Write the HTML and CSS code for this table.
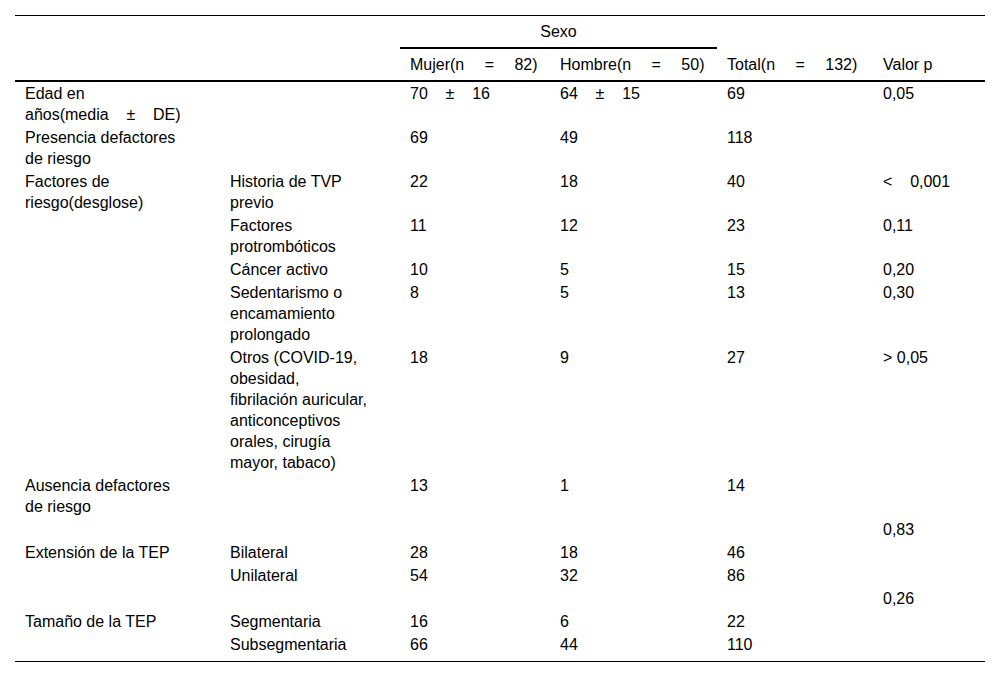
FILE: index.html
```html
<!DOCTYPE html>
<html lang="es">
<head>
<meta charset="utf-8">
<title>Tabla</title>
<link rel="stylesheet" href="styles.css">
</head>
<body>
<table class="tbl">
  <colgroup>
    <col class="w1"><col class="w2"><col class="w3"><col class="w4"><col class="w5"><col class="w6">
  </colgroup>
  <thead>
    <tr class="h1">
      <td colspan="2"></td>
      <th colspan="2" class="sexo">Sexo</th>
      <td colspan="2"></td>
    </tr>
    <tr class="h2">
      <th class="c1"></th>
      <th class="c2"></th>
      <th>Mujer(n&nbsp;&emsp;=&nbsp;&emsp;82)</th>
      <th>Hombre(n&nbsp;&emsp;=&nbsp;&emsp;50)</th>
      <th>Total(n&nbsp;&emsp;=&nbsp;&emsp;132)</th>
      <th>Valor p</th>
    </tr>
  </thead>
  <tbody>
    <tr>
      <td class="c1">Edad en años(media&nbsp;&nbsp;&nbsp;&nbsp;±&nbsp;&nbsp;&nbsp;&nbsp;DE)</td>
      <td class="c2"></td>
      <td>70&nbsp;&nbsp;&nbsp;&nbsp;±&nbsp;&nbsp;&nbsp;&nbsp;16</td>
      <td>64&nbsp;&nbsp;&nbsp;&nbsp;±&nbsp;&nbsp;&nbsp;&nbsp;15</td>
      <td>69</td>
      <td>0,05</td>
    </tr>
    <tr>
      <td class="c1">Presencia defactores de riesgo</td>
      <td class="c2"></td>
      <td>69</td>
      <td>49</td>
      <td>118</td>
      <td></td>
    </tr>
    <tr>
      <td class="c1">Factores de riesgo(desglose)</td>
      <td class="c2">Historia de TVP previo</td>
      <td>22</td>
      <td>18</td>
      <td>40</td>
      <td>&lt;&nbsp;&nbsp;&nbsp;&nbsp;0,001</td>
    </tr>
    <tr>
      <td class="c1"></td>
      <td class="c2">Factores protrombóticos</td>
      <td>11</td>
      <td>12</td>
      <td>23</td>
      <td>0,11</td>
    </tr>
    <tr>
      <td class="c1"></td>
      <td class="c2">Cáncer activo</td>
      <td>10</td>
      <td>5</td>
      <td>15</td>
      <td>0,20</td>
    </tr>
    <tr>
      <td class="c1"></td>
      <td class="c2">Sedentarismo o encamamiento prolongado</td>
      <td>8</td>
      <td>5</td>
      <td>13</td>
      <td>0,30</td>
    </tr>
    <tr>
      <td class="c1"></td>
      <td class="c2">Otros (COVID-19, obesidad, fibrilación auricular, anticonceptivos orales, cirugía mayor, tabaco)</td>
      <td>18</td>
      <td>9</td>
      <td>27</td>
      <td>&gt; 0,05</td>
    </tr>
    <tr>
      <td class="c1">Ausencia defactores de riesgo</td>
      <td class="c2"></td>
      <td>13</td>
      <td>1</td>
      <td>14</td>
      <td></td>
    </tr>
    <tr>
      <td class="c1"></td>
      <td class="c2"></td>
      <td></td>
      <td></td>
      <td></td>
      <td>0,83</td>
    </tr>
    <tr>
      <td class="c1">Extensión de la TEP</td>
      <td class="c2">Bilateral</td>
      <td>28</td>
      <td>18</td>
      <td>46</td>
      <td></td>
    </tr>
    <tr>
      <td class="c1"></td>
      <td class="c2">Unilateral</td>
      <td>54</td>
      <td>32</td>
      <td>86</td>
      <td></td>
    </tr>
    <tr>
      <td class="c1"></td>
      <td class="c2"></td>
      <td></td>
      <td></td>
      <td></td>
      <td>0,26</td>
    </tr>
    <tr>
      <td class="c1">Tamaño de la TEP</td>
      <td class="c2">Segmentaria</td>
      <td>16</td>
      <td>6</td>
      <td>22</td>
      <td></td>
    </tr>
    <tr class="last">
      <td class="c1"></td>
      <td class="c2">Subsegmentaria</td>
      <td>66</td>
      <td>44</td>
      <td>110</td>
      <td></td>
    </tr>
  </tbody>
</table>
</body>
</html>
```
FILE: styles.css
```css
html, body {
  background: #ffffff;
}
body {
  margin: 15px;
  font-family: "Liberation Sans", Arial, sans-serif;
  font-size: 16px;
  line-height: 21px;
  color: #000000;
}
.tbl {
  width: 970px;
  table-layout: fixed;
  border-collapse: collapse;
  border-top: 1px solid #000;
  border-bottom: 1px solid #000;
}
.w1 { width: 205px; }
.w2 { width: 180px; }
.w3 { width: 150px; }
.w4 { width: 167px; }
.w5 { width: 156px; }
.w6 { width: 112px; }

.tbl th,
.tbl td {
  padding: 1px 10px;
  text-align: left;
  vertical-align: top;
  font-weight: normal;
}
.tbl thead th,
.tbl thead td {
  padding-top: 5px;
  padding-bottom: 5px;
  vertical-align: middle;
}
.tbl .sexo {
  text-align: center;
  border-bottom: 2px solid #000;
}
.tbl .h2 th {
  border-bottom: 2px solid #000;
}
.tbl .c1 {
  padding-right: 35px;
}
.tbl .c2 {
  padding-right: 29px;
}
.tbl .last td {
  padding-bottom: 6px;
}
```
